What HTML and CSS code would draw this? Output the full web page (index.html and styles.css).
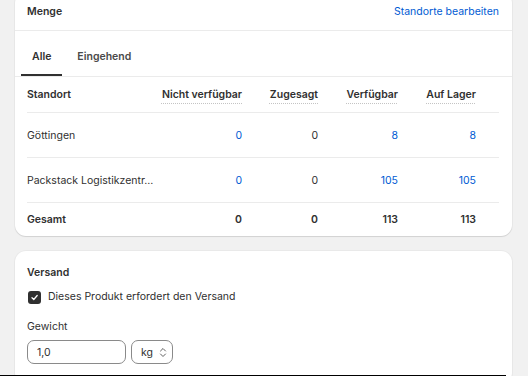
FILE: index.html
```html
<!DOCTYPE html>
<html lang="de">
<head>
    <meta charset="UTF-8">
    <meta name="viewport" content="width=device-width, initial-scale=1.0">
    <title>Menge</title>
    <link rel="stylesheet" href="styles.css">
</head>
<body>
    <div class="page">
        <div class="card stock">
            <div class="card-header">
                <h3>Menge</h3>
                <a href="#" class="link">Standorte bearbeiten</a>
            </div>
            <div class="tabs">
                <button class="tab active">Alle</button>
                <button class="tab">Eingehend</button>
            </div>
            <div class="table">
                <div class="row head">
                    <span>Standort</span>
                    <span class="num"><span class="hint">Nicht verfügbar</span></span>
                    <span class="num"><span class="hint">Zugesagt</span></span>
                    <span class="num"><span class="hint">Verfügbar</span></span>
                    <span class="num"><span class="hint">Auf Lager</span></span>
                </div>
                <div class="row">
                    <span>Göttingen</span>
                    <span class="num blue">0</span>
                    <span class="num">0</span>
                    <span class="num blue">8</span>
                    <span class="num blue">8</span>
                </div>
                <div class="row">
                    <span>Packstack Logistikzentr...</span>
                    <span class="num blue">0</span>
                    <span class="num">0</span>
                    <span class="num blue">105</span>
                    <span class="num blue">105</span>
                </div>
                <div class="row total">
                    <span>Gesamt</span>
                    <span class="num">0</span>
                    <span class="num">0</span>
                    <span class="num">113</span>
                    <span class="num">113</span>
                </div>
            </div>
        </div>

        <div class="card shipping">
            <h3>Versand</h3>
            <label class="check">
                <span class="box">
                    <svg width="9" height="9" viewBox="0 0 10 10"><path d="M2.2 5.2l2 2 3.8-4.4" fill="none" stroke="#fff" stroke-width="1.4" stroke-linecap="round" stroke-linejoin="round"/></svg>
                </span>
                Dieses Produkt erfordert den Versand
            </label>
            <div class="field-label">Gewicht</div>
            <div class="weight">
                <div class="input">1,0</div>
                <div class="select">
                    kg
                    <svg width="8" height="11" viewBox="0 0 8 11"><path d="M1.5 4L4 1.5 6.5 4M1.5 7L4 9.5 6.5 7" fill="none" stroke="#616161" stroke-width="1" stroke-linecap="round" stroke-linejoin="round"/></svg>
                </div>
            </div>
        </div>
    </div>
    <div class="bottom-line"></div>
</body>
</html>
```

FILE: styles.css
```css
body {
    font-family: Inter, "Noto Sans", sans-serif;
    font-size: 10.5px;
    color: #303030;
    margin: 0;
    background-color: #f1f1f1;
    height: 376px;
    overflow: hidden;
    position: relative;
}

.page {
    padding: 0 16px 0 15px;
    margin-top: -8px;
}

.card {
    background-color: #fff;
    border-radius: 11px;
    box-shadow: 0 1px 1px rgba(0, 0, 0, 0.1), 0 0 0 1px rgba(0, 0, 0, 0.03);
}

h3 {
    margin: 0;
    font-size: 10.5px;
    font-weight: 600;
    line-height: 16px;
}

.card-header {
    display: flex;
    justify-content: space-between;
    align-items: center;
    padding: 12px 13px 10px 12px;
    border-bottom: 1px solid #ebebeb;
}

.link {
    color: #005bd3;
    text-decoration: none;
    line-height: 16px;
}

.tabs {
    display: flex;
    gap: 4px;
    padding: 6px 6px 0;
    border-bottom: 1px solid #ebebeb;
}

.tab {
    font: inherit;
    font-weight: 600;
    color: #4a4a4a;
    background: none;
    border: none;
    border-bottom: 2px solid transparent;
    padding: 13px 11px 10px;
    line-height: 14px;
}

.tab.active {
    color: #303030;
    border-bottom-color: #303030;
}

.table {
    margin: 0 13px 0 12px;
}

.row {
    display: grid;
    grid-template-columns: 1fr 84px 76px 80px 78px;
    padding-right: 23px;
    align-items: center;
    height: 44px;
    border-bottom: 1px solid #ebebeb;
    white-space: nowrap;
}

.row.head {
    height: 35px;
    font-weight: 600;
}

.row.total {
    height: 33px;
    border-bottom: none;
    font-weight: 600;
}

.num {
    text-align: right;
}

.blue {
    color: #005bd3;
}

.hint {
    text-decoration: underline dotted #c4c4c4;
    text-underline-offset: 5px;
}

.shipping {
    margin-top: 15px;
    padding: 14px 12px 20px;
}

.check {
    display: flex;
    align-items: center;
    gap: 7px;
    margin-top: 9px;
    line-height: 14px;
}

.box {
    width: 13px;
    height: 13px;
    margin-left: 1px;
    border-radius: 3px;
    background-color: #303030;
    display: flex;
    align-items: center;
    justify-content: center;
}

.field-label {
    margin-top: 16px;
    line-height: 14px;
}

.weight {
    display: flex;
    gap: 5px;
    margin-top: 6px;
}

.input, .select {
    height: 22px;
    border: 1px solid #8a8a8a;
    border-radius: 7px;
    display: flex;
    align-items: center;
    box-sizing: content-box;
}

.input {
    width: 88px;
    padding: 0 0 0 9px;
}

.select {
    width: 26px;
    padding: 0 5px 0 9px;
    justify-content: space-between;
}

.bottom-line {
    position: absolute;
    left: 0;
    bottom: 0;
    width: 506px;
    height: 1px;
    background-color: #000;
}
```
